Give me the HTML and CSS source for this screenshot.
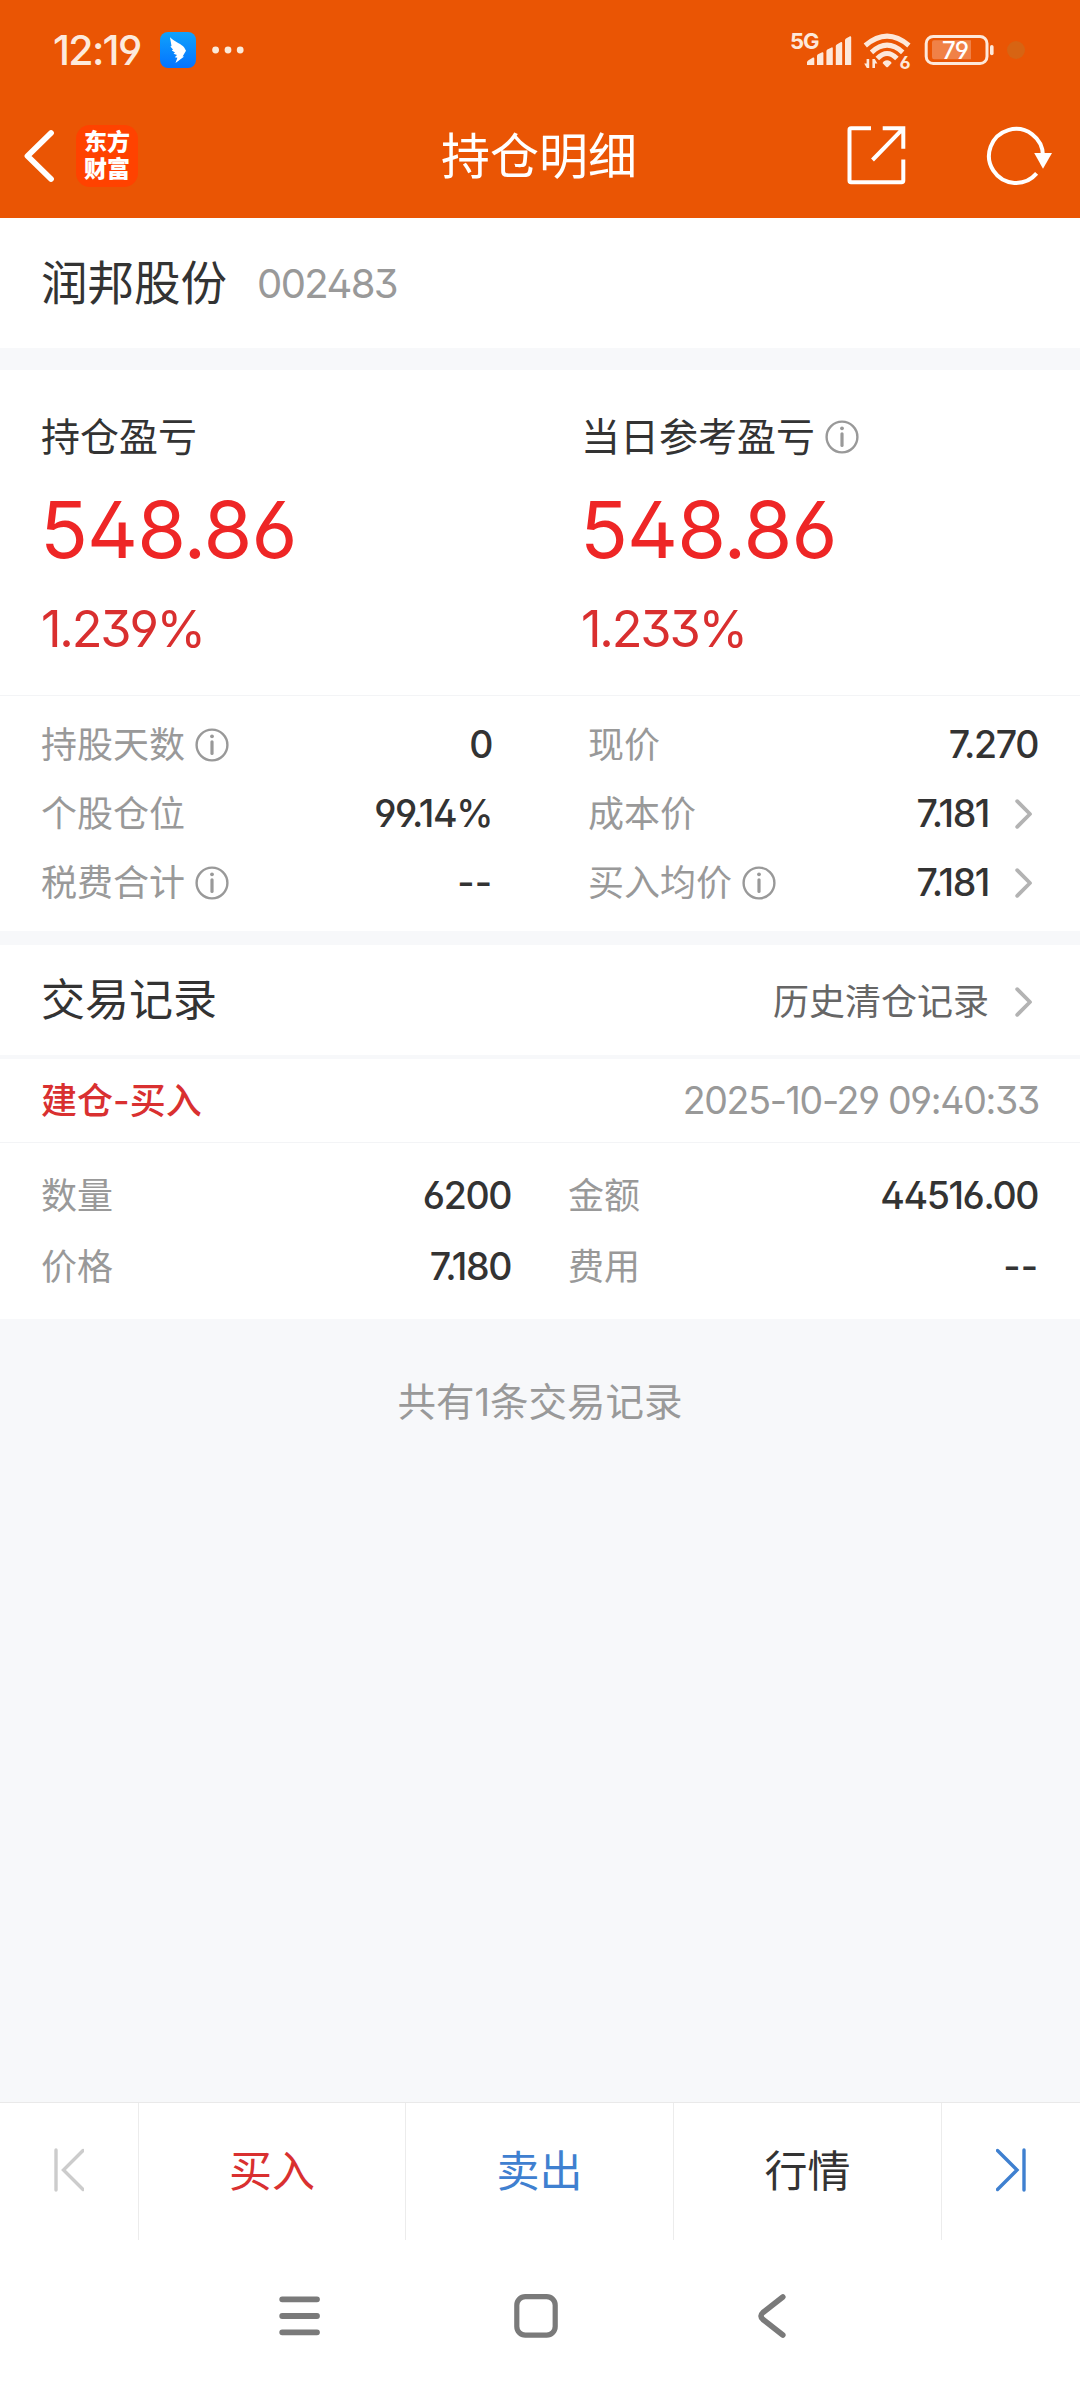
FILE: index.html
```html
<!DOCTYPE html>
<html lang="zh-CN">
<head>
<meta charset="utf-8">
<title>持仓明细</title>
<link rel="stylesheet" href="styles.css">
</head>
<body>
<svg class="defs" width="0" height="0">
  <symbol id="info" viewBox="0 0 34 34"><circle cx="17" cy="17" r="15.4" fill="none" stroke="#999" stroke-width="2.4"/><circle cx="17" cy="8.3" r="1.9" fill="#999"/><path d="M17 13.8V25.4" stroke="#999" stroke-width="3.2" stroke-linecap="round"/></symbol>
  <symbol id="more" viewBox="0 0 18 30"><path d="M2.2 2.2 15 15 2.2 27.8" fill="none" stroke="#b3b3b3" stroke-width="3.8" stroke-linecap="round" stroke-linejoin="round"/></symbol>
</svg>
<header class="header">
  <div class="status">
    <span class="time">12:19</span>
    <svg class="ding" viewBox="0 0 36 36"><defs><linearGradient id="dg" x1="0" y1="0" x2="0" y2="1"><stop offset="0" stop-color="#10a2fb"/><stop offset="1" stop-color="#0473ff"/></linearGradient></defs><rect width="36" height="36" rx="8" fill="url(#dg)"/><path d="M10 5.2C15 10 22 12 24.200 15.500L26 18.700 22.600 24.500H24.200L15.500 31 17.400 25.800 14.800 25.200 17 23 13.500 21.800 15 20.500 11.800 18.500 13 17.500 10.400 14.500 11.500 14Z" fill="#fff"/></svg>
    <svg class="dots" viewBox="0 0 34 8"><g fill="#fbeada"><circle cx="4.600" cy="4" r="3.400"/><circle cx="17" cy="4" r="3.400"/><circle cx="29.200" cy="4" r="3.400"/></g></svg>
    <svg class="radio" viewBox="784 20 246 60">
      <g fill="#fde8da">
        <text class="net" x="790" y="48.700">5G</text>
        <path d="M807 65V62.500Q807 61 808.500 60.300L813 57.500Q814.300 57 814.300 58.500V65ZM817 65V56Q817 54.800 818 54.200L822.200 52.200Q823.400 52 823.400 53V65ZM826.400 65V51.500Q826.400 50.200 827.400 49.600L831.600 47.400Q832.800 47.200 832.800 48.300V65ZM835.800 65V46Q835.800 45 836.800 44.400L841 42.100Q842.200 41.800 842.200 43V65ZM845 65V40.500Q845 39.200 846 38.600L850 36.300Q851.200 36 851.200 37.200V65Z"/>
        <path d="M882.700 63.200Q882.500 62.200 884 61.200 887.100 59.200 890.200 61.200 891.700 62.200 891.500 63.200L887.900 67Q887.100 67.600 886.300 67Z"/>
        <path d="M869.200 59V68H866.800L864.200 63.600H866.600V59ZM872.400 68V59H874.800L877.400 63.400H875V68Z"/>
        <text class="six" x="899.500" y="68.500">6</text>
        <rect x="990" y="45" width="3.600" height="10.300" rx="1.800"/>
      </g>
      <g fill="none" stroke="#fde8da" stroke-width="5">
        <path d="M865.300 45.500Q887.100 26.800 908.900 45.500"/><path d="M871.500 52.300Q887.100 38 902.700 52.300"/><path d="M877.300 58.500Q887.100 48.500 896.900 58.500"/>
        <rect x="926.200" y="36.500" width="60.800" height="27" rx="7" stroke-width="3"/>
      </g>
      <path d="M934 40.300H971V59.300H934Q932 59.300 932 57V42.500Q932 40.300 934 40.300Z" fill="#f08147"/>
      <text class="batt" x="942" y="59.300" fill="#fff">79</text>
      <circle cx="1016" cy="50" r="9" fill="#d76413"/>
    </svg>
  </div>
  <div class="titlebar">
    <svg class="back" viewBox="0 0 30 54"><path d="M27 4 3.500 27 27 50" fill="none" stroke="#fff" stroke-width="5.800" stroke-linecap="round" stroke-linejoin="round"/></svg>
    <div class="logo">东方<br>财富</div>
    <h1 class="title">持仓明细</h1>
    <svg class="share" viewBox="847 126 60 60"><g fill="none" stroke="#fff" stroke-width="4"><path d="M871 128.300H851Q849.500 128.300 849.500 130V180.500Q849.500 182.300 851 182.300H901.500Q903.300 182.300 903.300 180.500V159.500M882.700 128.300H903.300V148.700M903.300 128.300 872.500 160"/></g></svg>
    <svg class="refresh" viewBox="986 126 68 60"><path d="M1043 156A27 27 0 1 0 1036.600 173.400" fill="none" stroke="#fff" stroke-width="4"/><path d="M1034.200 153H1052L1043 168.800Z" fill="#fff"/></svg>
  </div>
</header>
<main>
  <section class="stock"><span class="name">润邦股份</span><span class="code">002483</span></section>
  <section class="profit">
    <div class="col"><div class="cap">持仓盈亏</div><div class="big">548.86</div><div class="pct">1.239%</div></div>
    <div class="col"><div class="cap">当日参考盈亏<svg class="info"><use href="#info"/></svg></div><div class="big">548.86</div><div class="pct">1.233%</div></div>
  </section>
  <section class="facts">
    <div class="row"><span class="label">持股天数<svg class="info"><use href="#info"/></svg></span><span class="value">0</span></div>
    <div class="row"><span class="label">现价</span><span class="value">7.270</span></div>
    <div class="row"><span class="label">个股仓位</span><span class="value">99.14%</span></div>
    <div class="row"><span class="label">成本价</span><span class="value">7.181</span><svg class="more"><use href="#more"/></svg></div>
    <div class="row"><span class="label">税费合计<svg class="info"><use href="#info"/></svg></span><span class="value dash">--</span></div>
    <div class="row"><span class="label">买入均价<svg class="info"><use href="#info"/></svg></span><span class="value">7.181</span><svg class="more"><use href="#more"/></svg></div>
  </section>
  <section class="records">
    <div class="rec-head"><h2 class="rec-title">交易记录</h2><span class="history">历史清仓记录</span><svg class="more"><use href="#more"/></svg></div>
    <div class="trade-head"><span class="kind">建仓-买入</span><span class="date">2025-10-29 09:40:33</span></div>
    <div class="trade">
      <div class="row"><span class="label">数量</span><span class="value">6200</span></div>
      <div class="row"><span class="label">金额</span><span class="value">44516.00</span></div>
      <div class="row"><span class="label">价格</span><span class="value">7.180</span></div>
      <div class="row"><span class="label">费用</span><span class="value dash">--</span></div>
    </div>
  </section>
  <p class="total">共有1条交易记录</p>
</main>
<footer>
  <div class="actions">
    <div class="act"><svg class="skip" viewBox="0 0 30 44"><path d="M2 2V42M29 2.500 9.500 22 29 41.500" fill="none" stroke="#ccc" stroke-width="3.400" stroke-linecap="round"/></svg></div>
    <div class="act buy">买入</div>
    <div class="act sell">卖出</div>
    <div class="act">行情</div>
    <div class="act"><svg class="skip" viewBox="0 0 30 44"><path d="M28 2V42M1.500 2.500 21 22 1.500 41.500" fill="none" stroke="#3f80d0" stroke-width="3.400" stroke-linecap="round"/></svg></div>
  </div>
  <div class="sysnav">
    <svg class="navicon" viewBox="0 0 48 48"><path d="M6.200 7.300H41M6.200 24H41M6.200 40.300H41" stroke="#7a7a7a" stroke-width="5.800" stroke-linecap="round"/></svg>
    <svg class="navicon" viewBox="0 0 48 48"><rect x="4.800" y="4.700" width="38.400" height="38.400" rx="8.500" fill="none" stroke="#7a7a7a" stroke-width="5.200"/></svg>
    <svg class="navicon" viewBox="0 0 48 48"><path d="M34.800 5 15 20.500Q11 24 15 27.500L34.800 43" fill="none" stroke="#7a7a7a" stroke-width="5.600" stroke-linecap="round"/></svg>
  </div>
</footer>
</body>
</html>
```
FILE: styles.css
```css
* { box-sizing: border-box; }
body {
  margin: 0;
  width: 1080px;
  height: 2400px;
  display: flex;
  flex-direction: column;
  background: #f7f8fa;
  color: #333;
  font-family: Inter, "Noto Sans CJK SC", sans-serif;
  font-feature-settings: "ss01", "cv09";
  line-height: 1;
}
svg { display: block; flex: none; }
.defs { position: absolute; }
h1, h2, p { margin: 0; font-weight: 400; }

.header { height: 218px; background: #ea5504; color: #fff; }
.status { height: 100px; display: flex; align-items: center; padding: 0 50px 0 53px; color: #fdeadc; }
.time { width: 107px; font-size: 41px; font-weight: 500; letter-spacing: -1.7px; }
.ding { width: 36px; height: 36px; }
.dots { width: 34px; height: 8px; margin-left: 15px; }
.radio { width: 246px; height: 60px; margin-left: auto; }
.net { font-size: 22px; font-weight: 700; letter-spacing: -1px; }
.six { font-size: 18px; font-weight: 700; }
.batt { font-size: 24px; font-weight: 500; letter-spacing: -1px; }

.titlebar { height: 112px; display: grid; grid-template-columns: 76px 365px 1fr 139px 94px; align-items: center; }
.back { width: 30px; height: 54px; margin-left: 24px; }
.logo {
  width: 62px; height: 62px; padding-top: 4px; border-radius: 14px;
  background: #ff4200; font-size: 23px; font-weight: 800; line-height: 27px; text-align: center;
}
.title { font-size: 49px; white-space: nowrap; }
.share { width: 60px; height: 60px; }
.refresh { width: 68px; height: 60px; }

.stock { height: 130px; padding-left: 41px; display: flex; align-items: center; background: #fff; }
.name { width: 216px; font-size: 46.5px; }
.code { font-size: 40px; letter-spacing: -1.6px; color: #999; margin-top: 2px; }

.profit { height: 325px; margin-top: 22px; padding-top: 47px; display: grid; grid-template-columns: 1fr 1fr; background: #fff; }
.col { padding-left: 41px; }
.cap { height: 39px; display: flex; align-items: center; font-size: 39px; }
.info { width: 34px; height: 34px; }
.cap .info { margin-left: 10px; }
.big { margin: 34px 0 0 -1px; font-size: 79px; line-height: 79px; letter-spacing: -0.9px; color: #ee2626; }
.pct { margin-top: 35px; font-size: 50.5px; line-height: 50px; letter-spacing: -2.2px; color: #d92f2f; }

.facts {
  height: 236px; padding: 14px 42px 0 41px; display: grid;
  grid-template-columns: 451px 450px; grid-auto-rows: 69px; column-gap: 96px;
  background: #fff; border-top: 1px solid #f3f4f6;
}
.row { display: flex; align-items: center; }
.label { display: flex; align-items: center; flex: 1; font-size: 36px; color: #999; }
.label .info { margin-left: 10px; }
.value { margin-top: 1px; font-size: 37.5px; font-weight: 450; letter-spacing: -1.4px; }
.dash { font-weight: 500; letter-spacing: 0; }
.more { width: 18px; height: 30px; }
.value + .more { margin: 0 5px 0 26px; }

.records { margin-top: 14px; background: #fff; }
.rec-head { height: 114px; display: flex; align-items: center; padding: 0 47px 0 41px; border-bottom: 4px solid #f7f8fa; }
.rec-title { flex: 1; font-size: 44px; }
.history { font-size: 36px; color: #666; margin-top: 3px; }
.history + .more { margin: 4px 0 0 26px; }
.trade-head { height: 84px; display: flex; align-items: center; justify-content: space-between; padding: 0 41px; border-bottom: 1px solid #f3f4f6; }
.kind { font-size: 36px; font-weight: 500; color: #d93030; }
.date { font-size: 37.5px; letter-spacing: -1.3px; color: #999; }
.trade {
  height: 176px; padding: 17px 42px 0 41px; display: grid;
  grid-template-columns: 470px 470px; grid-auto-rows: 71px; column-gap: 57px;
}
.total { margin-top: 64px; font-size: 38.5px; text-align: center; color: #999; }

footer { margin-top: auto; height: 298px; background: #fff; border-top: 1px solid #e9e9e9; }
.actions { height: 137px; display: grid; grid-template-columns: 139px 267px 268px 268px 138px; }
.act { display: flex; align-items: center; justify-content: center; font-size: 43px; border-right: 1px solid #ececec; }
.act:last-child { border-right: 0; }
.buy { color: #d93030; }
.sell { color: #3f80d0; }
.skip { width: 30px; height: 44px; margin-top: -4px; }
.sysnav { display: flex; justify-content: center; gap: 188px; padding: 52px 0 0; margin-left: -8px; }
.navicon { width: 48px; height: 48px; }
```
